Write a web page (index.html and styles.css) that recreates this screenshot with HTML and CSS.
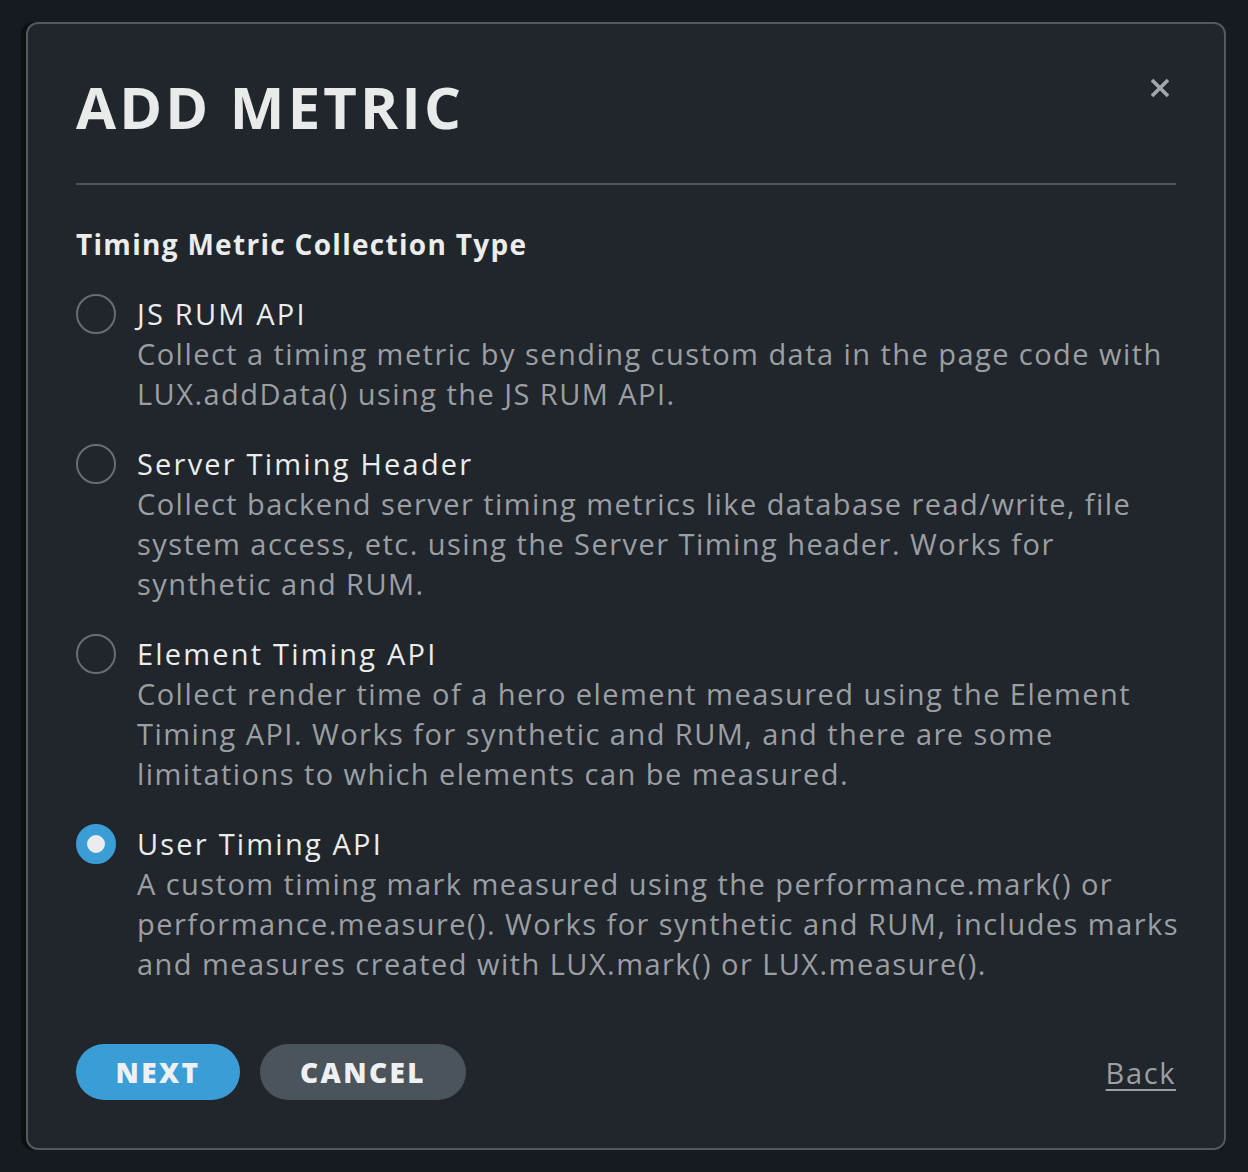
FILE: index.html
```html
<!DOCTYPE html>
<html lang="en">
<head>
<meta charset="utf-8">
<title>Add Metric</title>
<link rel="stylesheet" href="styles.css">
</head>
<body>
<div class="page">
  <div class="modal">
    <div class="modal-header">
      <h1 class="modal-title">ADD METRIC</h1>
      <button class="close" aria-label="Close">
        <svg width="20" height="20" viewBox="0 0 20 20"><path d="M2 2 L18 18 M18 2 L2 18" stroke="#a3a7ab" stroke-width="3.6" stroke-linecap="butt" fill="none"/></svg>
      </button>
    </div>
    <hr class="divider">
    <h2 class="section-title">Timing Metric Collection Type</h2>
    <div class="options">
      <label class="option">
        <span class="radio"></span>
        <span class="option-text">
          <span class="option-label">JS RUM API</span>
          <span class="option-desc">Collect a timing metric by sending custom data in the page code with<br>LUX.addData() using the JS RUM API.</span>
        </span>
      </label>
      <label class="option">
        <span class="radio"></span>
        <span class="option-text">
          <span class="option-label">Server Timing Header</span>
          <span class="option-desc">Collect backend server timing metrics like database read/write, file<br>system access, etc. using the Server Timing header. Works for<br>synthetic and RUM.</span>
        </span>
      </label>
      <label class="option">
        <span class="radio"></span>
        <span class="option-text">
          <span class="option-label">Element Timing API</span>
          <span class="option-desc">Collect render time of a hero element measured using the Element<br>Timing API. Works for synthetic and RUM, and there are some<br>limitations to which elements can be measured.</span>
        </span>
      </label>
      <label class="option">
        <span class="radio checked"></span>
        <span class="option-text">
          <span class="option-label">User Timing API</span>
          <span class="option-desc">A custom timing mark measured using the performance.mark() or<br>performance.measure(). Works for synthetic and RUM, includes marks<br>and measures created with LUX.mark() or LUX.measure().</span>
        </span>
      </label>
    </div>
    <div class="footer">
      <button class="btn btn-primary">NEXT</button>
      <button class="btn btn-secondary">CANCEL</button>
      <a class="back" href="#">Back</a>
    </div>
  </div>
</div>
</body>
</html>
```
FILE: styles.css
```css
* { box-sizing: border-box; }
html, body {
  margin: 0;
  padding: 0;
  background: #151b20;
}
body {
  font-family: "Open Sans", "Noto Sans", sans-serif;
}
.page {
  padding: 22px 22px 0 26px;
}
.modal {
  width: 1200px;
  height: 1128px;
  background: #20262c;
  border: 2px solid #54595d;
  border-radius: 12px;
  box-shadow: -5px 0 0 0 #0c1013, 0 2px 0 0 #0c1013;
  padding: 48px;
  display: flex;
  flex-direction: column;
}
.modal-header {
  display: flex;
  justify-content: space-between;
  align-items: flex-start;
}
.modal-title {
  margin: 0;
  font-size: 58px;
  line-height: 70px;
  font-weight: 700;
  color: #e9eaea;
  letter-spacing: 3.2px;
}
.close {
  width: 32px;
  height: 32px;
  margin-top: 0;
  background: none;
  border: 0;
  padding: 0;
  display: flex;
  align-items: center;
  justify-content: center;
}
.divider {
  border: 0;
  height: 2px;
  background: #4e5357;
  margin: 41px 0 0 0;
}
.section-title {
  margin: 41px 0 0 0;
  font-size: 28px;
  line-height: 36px;
  font-weight: 700;
  color: #ececec;
  letter-spacing: 1.3px;
}
.options {
  display: flex;
  flex-direction: column;
  gap: 30px;
  margin-top: 32px;
}
.option {
  display: flex;
  gap: 21px;
  align-items: flex-start;
}
.radio {
  flex: none;
  width: 40px;
  height: 40px;
  border-radius: 50%;
  border: 2px solid #686d71;
}
.radio.checked {
  border: 11px solid #3a9dd6;
  background: #e9ebec;
}
.option-text {
  display: flex;
  flex-direction: column;
  font-size: 29px;
  line-height: 40px;
  letter-spacing: 1.45px;
  white-space: nowrap;
}
.option-label {
  color: #ececec;
  letter-spacing: 2.2px;
}
.option-desc {
  color: #9b9fa3;
}
.footer {
  margin-top: auto;
  display: flex;
  align-items: center;
  gap: 20px;
}
.btn {
  height: 56px;
  border-radius: 28px;
  border: 0;
  font-family: "Open Sans", "Noto Sans", sans-serif;
  font-weight: 800;
  font-size: 28px;
  letter-spacing: 2.4px;
  color: #eef1f3;
}
.btn-primary {
  width: 164px;
  background: #3a9dd6;
}
.btn-secondary {
  width: 206px;
  background: #4a545a;
}
.back {
  margin-left: auto;
  color: #9b9fa3;
  font-size: 29px;
  letter-spacing: 1.6px;
  text-decoration: underline;
  text-underline-offset: 5px;
  text-decoration-thickness: 2px;
}
```
